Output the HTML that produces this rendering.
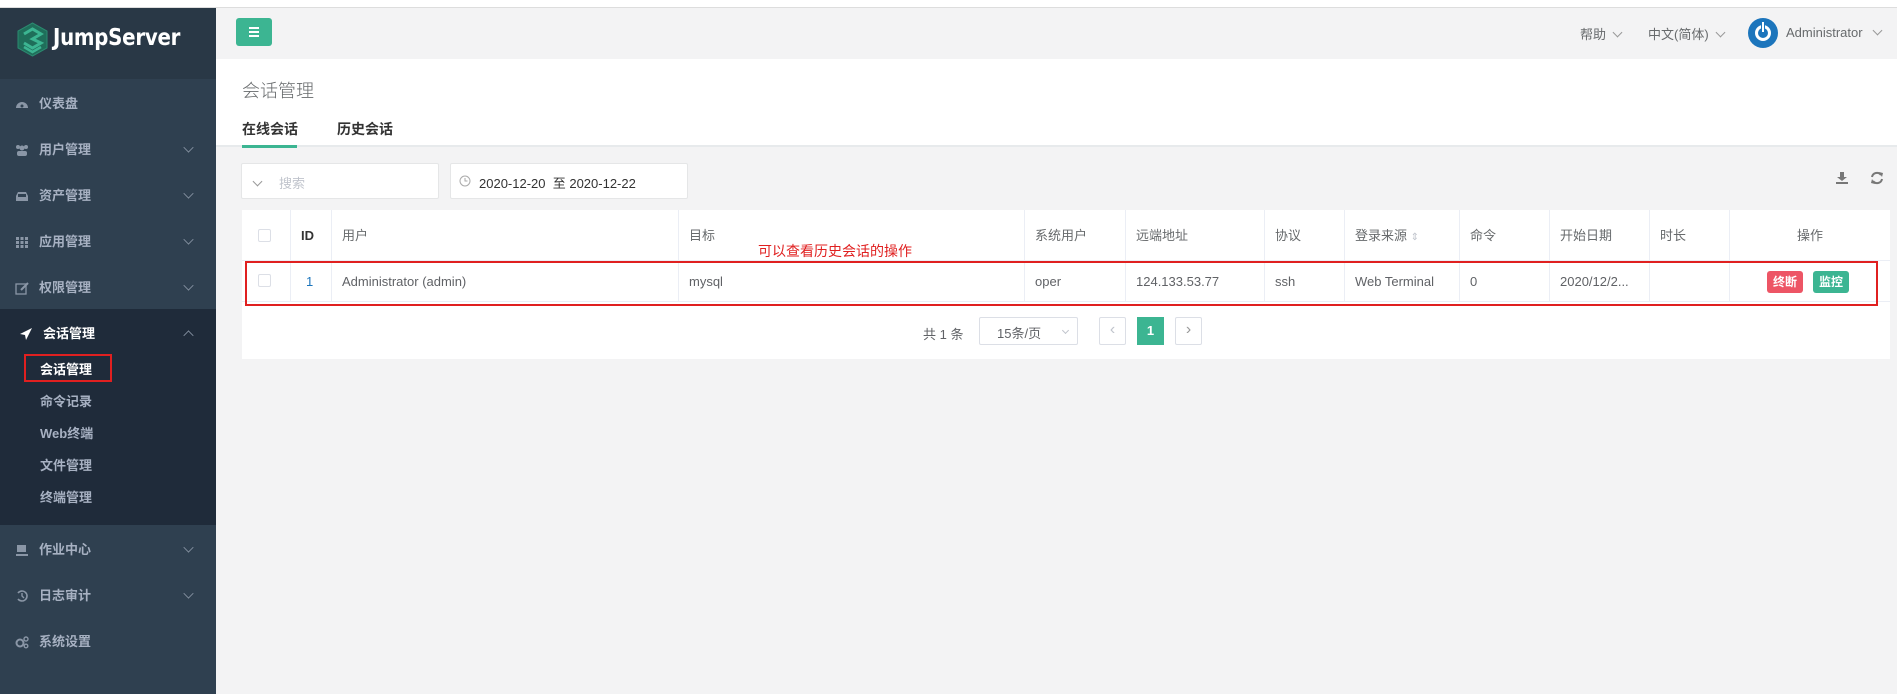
<!DOCTYPE html>
<html><head><meta charset="utf-8"><style>
*{box-sizing:border-box;margin:0;padding:0}
body{width:1897px;height:694px;overflow:hidden;background:#f3f3f4;font-family:"Liberation Sans","Noto Sans CJK SC",sans-serif;font-size:13px;color:#676a6c;position:relative}
.a{position:absolute}
.topw{left:0;top:0;width:1897px;height:8px;background:#fff;border-bottom:1px solid #ddd}
.side{left:0;top:8px;width:216px;height:686px;background:#2f4050}
.logo{left:0;top:8px;width:216px;height:71px;background:#293846}
.mi{position:absolute;left:0;width:216px;color:#a7b1c2;font-weight:bold;font-size:13px;line-height:20px}
.mi .ic{position:absolute;left:15px;top:3px;width:14px;height:14px}
.mi .t{position:absolute;left:39px;top:0;white-space:nowrap}
.mi .ch{position:absolute;left:184px;top:3px;width:9px;height:9px;border-right:1px solid #8a96a6;border-bottom:1px solid #8a96a6;transform:rotate(45deg) scale(.8)}
.sub{position:absolute;left:40px;color:#a7b1c2;font-weight:bold;font-size:13px;line-height:20px}
.hdr{left:216px;top:9px;width:1681px;height:50px;background:#f3f3f4}
.wh{left:216px;top:59px;width:1681px;height:88px;background:#fff;border-bottom:2px solid #e7eaec}
.box{background:#fff;border:1px solid #e5e6e7;border-radius:2px}
.th{position:absolute;top:210px;height:51px;line-height:51px;font-size:13px;color:#676a6c;border-left:1px solid #ebeef5;padding-left:10px;white-space:nowrap}
.td{position:absolute;top:261px;height:41px;line-height:41px;font-size:13px;color:#606266;border-left:1px solid #ebeef5;padding-left:10px;white-space:nowrap}
.cb{position:absolute;width:13px;height:13px;border:1px solid #dcdfe6;border-radius:2px;background:#fff}
.dc{display:inline-block;width:7px;height:7px;border-right:1px solid #999;border-bottom:1px solid #999;transform:rotate(45deg);margin-left:8px;position:relative;top:-3px}
</style></head><body>
<div class="a topw"></div>
<div class="a side"></div>
<div class="a logo"></div>
<svg class="a" style="left:17px;top:22px" width="31" height="35" viewBox="0 0 31 35"><polygon points="15.5,1 30,9 30,26 15.5,34 1,26 1,9" fill="#1f6e5a" stroke="#2b8a70" stroke-width="1"/><path d="M7 12 L15.5 7 L24 12 L15.5 17 L24 21 L15.5 26 L7 21" fill="none" stroke="#3cb592" stroke-width="3"/><path d="M7 25 L15.5 30 L24 25" fill="none" stroke="#3cb592" stroke-width="2.5"/></svg>
<div class="a" style="left:53px;top:25px;color:#fff;font-weight:bold;font-size:23px;letter-spacing:-0.3px;font-family:'DejaVu Sans','Liberation Sans',sans-serif;transform:scaleX(.86);transform-origin:left">JumpServer</div>

<div class="mi" style="top:94px"><svg class="ic" viewBox="0 0 14 14"><path d="M1 11 A6 6 0 1 1 13 11 Z" fill="#8a96a6"/><circle cx="7" cy="9" r="1.5" fill="#2f4050"/></svg><span class="t">仪表盘</span></div>
<div class="mi" style="top:140px"><svg class="ic" viewBox="0 0 14 14"><circle cx="3" cy="4" r="2" fill="#8a96a6"/><circle cx="11" cy="4" r="2" fill="#8a96a6"/><circle cx="7" cy="5" r="2.5" fill="#8a96a6"/><rect x="2" y="8" width="10" height="5" rx="2" fill="#8a96a6"/></svg><span class="t">用户管理</span><span class="ch"></span></div>
<div class="mi" style="top:186px"><svg class="ic" viewBox="0 0 14 14"><path d="M1 7 L3 3 H11 L13 7 V12 H1Z" fill="#8a96a6"/><rect x="3" y="5" width="8" height="3" fill="#2f4050"/></svg><span class="t">资产管理</span><span class="ch"></span></div>
<div class="mi" style="top:232px"><svg class="ic" viewBox="0 0 14 14" fill="#8a96a6"><rect x="1" y="2" width="3" height="3"/><rect x="5.5" y="2" width="3" height="3"/><rect x="10" y="2" width="3" height="3"/><rect x="1" y="6" width="3" height="3"/><rect x="5.5" y="6" width="3" height="3"/><rect x="10" y="6" width="3" height="3"/><rect x="1" y="10" width="3" height="3"/><rect x="5.5" y="10" width="3" height="3"/><rect x="10" y="10" width="3" height="3"/></svg><span class="t">应用管理</span><span class="ch"></span></div>
<div class="mi" style="top:278px"><svg class="ic" viewBox="0 0 14 14"><rect x="1" y="3" width="10" height="10" fill="none" stroke="#8a96a6" stroke-width="1.3"/><path d="M6 9 L13 2" stroke="#8a96a6" stroke-width="2"/></svg><span class="t">权限管理</span><span class="ch"></span></div>
<div class="a" style="left:0;top:309px;width:216px;height:216px;background:#1f2b3a"></div>
<div class="mi" style="top:324px;color:#fff"><svg class="ic" style="left:19px" viewBox="0 0 14 14"><path d="M13 1 L1 7 L6 8 L7 13Z" fill="#fff"/></svg><span class="t" style="left:43px">会话管理</span><span class="ch" style="transform:rotate(-135deg) scale(.8);top:7px"></span></div>
<div class="sub" style="top:360px;color:#fff">会话管理</div>
<div class="a" style="left:24px;top:354px;width:88px;height:28px;border:2px solid #e02020"></div>
<div class="sub" style="top:392px">命令记录</div>
<div class="sub" style="top:424px">Web终端</div>
<div class="sub" style="top:456px">文件管理</div>
<div class="sub" style="top:488px">终端管理</div>
<div class="mi" style="top:540px"><svg class="ic" viewBox="0 0 14 14" fill="#8a96a6"><rect x="2" y="2" width="9" height="7"/><rect x="1" y="11" width="12" height="2"/></svg><span class="t">作业中心</span><span class="ch"></span></div>
<div class="mi" style="top:586px"><svg class="ic" viewBox="0 0 14 14"><path d="M3 4 A5 5 0 1 1 3 10" fill="none" stroke="#8a96a6" stroke-width="1.6"/><path d="M7 4 V7 L9 9" fill="none" stroke="#8a96a6" stroke-width="1.4"/></svg><span class="t">日志审计</span><span class="ch"></span></div>
<div class="mi" style="top:632px"><svg class="ic" viewBox="0 0 14 14"><circle cx="5" cy="8" r="3.5" fill="none" stroke="#8a96a6" stroke-width="2"/><circle cx="11" cy="4" r="2" fill="none" stroke="#8a96a6" stroke-width="1.4"/><circle cx="11" cy="11" r="1.8" fill="none" stroke="#8a96a6" stroke-width="1.4"/></svg><span class="t">系统设置</span></div>

<div class="a hdr"></div>
<div class="a" style="left:236px;top:18px;width:36px;height:28px;background:#3cb592;border-radius:3px"><div class="a" style="left:13px;top:9px;width:10px;height:2px;background:#fff;box-shadow:0 4px 0 #fff,0 8px 0 #fff"></div></div>
<div class="a" style="left:1580px;top:24px;font-size:13px;color:#676a6c">帮助<span class="dc"></span></div>
<div class="a" style="left:1648px;top:24px;font-size:13px;color:#676a6c">中文(简体)<span class="dc"></span></div>
<div class="a" style="left:1748px;top:18px;width:30px;height:30px;border-radius:50%;background:#1c75bc"></div>
<div class="a" style="left:1755px;top:25px;width:16px;height:16px;border-radius:50%;border:3px solid #fff"></div>
<div class="a" style="left:1761px;top:22px;width:4px;height:10px;background:#fff;border-left:1px solid #1c75bc;border-right:1px solid #1c75bc"></div>
<div class="a" style="left:1786px;top:25px;font-size:13px;color:#676a6c">Administrator</div>
<div class="a" style="left:1874px;top:27px;width:7px;height:7px;border-right:1px solid #999;border-bottom:1px solid #999;transform:rotate(45deg)"></div>

<div class="a wh"></div>
<div class="a" style="left:242px;top:77px;font-size:18px;color:#676a6c;font-weight:300">会话管理</div>
<div class="a" style="left:242px;top:119px;font-size:14px;color:#333;font-weight:bold">在线会话</div>
<div class="a" style="left:242px;top:145px;width:55px;height:3px;background:#3cb592"></div>
<div class="a" style="left:337px;top:119px;font-size:14px;color:#333;font-weight:bold">历史会话</div>

<div class="a box" style="left:241px;top:163px;width:198px;height:36px"><span class="dc" style="position:absolute;left:4px;top:14px"></span><span class="a" style="left:37px;top:9px;color:#c0c4cc">搜索</span></div>
<div class="a box" style="left:450px;top:163px;width:238px;height:36px"><svg class="a" style="left:8px;top:11px" width="12" height="12" viewBox="0 0 12 12"><circle cx="6" cy="6" r="5" fill="none" stroke="#aaa"/><path d="M6 3V6H8.5" fill="none" stroke="#aaa"/></svg><span class="a" style="left:28px;top:9px;color:#333;font-size:13px">2020-12-20&nbsp; 至 2020-12-22</span></div>
<svg class="a" style="left:1835px;top:171px" width="14" height="14" viewBox="0 0 14 14" fill="#777"><path d="M5 1H9V6H12L7 10L2 6H5Z"/><rect x="1" y="11" width="12" height="2"/></svg>
<svg class="a" style="left:1870px;top:171px" width="14" height="14" viewBox="0 0 14 14"><path d="M2 6 A5 5 0 0 1 11 4 M12 8 A5 5 0 0 1 3 10" fill="none" stroke="#777" stroke-width="2"/><path d="M9 1 L13 2 L12 6Z M5 13 L1 12 L2 8Z" fill="#777"/></svg>

<div class="a" style="left:242px;top:210px;width:1648px;height:149px;background:#fff"></div>
<div class="a" style="left:242px;top:260px;width:1648px;height:1px;background:#ebeef5"></div>
<div class="a" style="left:242px;top:301px;width:1648px;height:1px;background:#ebeef5"></div>
<div class="cb" style="left:258px;top:229px"></div>
<div class="th" style="left:290px;width:41px;font-weight:bold;color:#333">ID</div>
<div class="th" style="left:331px;width:347px">用户</div>
<div class="th" style="left:678px;width:346px">目标</div>
<div class="th" style="left:1024px;width:101px">系统用户</div>
<div class="th" style="left:1125px;width:139px">远端地址</div>
<div class="th" style="left:1264px;width:80px">协议</div>
<div class="th" style="left:1344px;width:115px">登录来源 <span style="color:#c0c4cc;font-size:10px">⇕</span></div>
<div class="th" style="left:1459px;width:90px">命令</div>
<div class="th" style="left:1549px;width:100px">开始日期</div>
<div class="th" style="left:1649px;width:80px">时长</div>
<div class="th" style="left:1729px;width:161px;text-align:center;padding:0">操作</div>
<div class="cb" style="left:258px;top:274px"></div>
<div class="td" style="left:290px;width:41px;color:#1c75bc;padding-left:15px">1</div>
<div class="td" style="left:331px;width:347px">Administrator (admin)</div>
<div class="td" style="left:678px;width:346px">mysql</div>
<div class="td" style="left:1024px;width:101px">oper</div>
<div class="td" style="left:1125px;width:139px">124.133.53.77</div>
<div class="td" style="left:1264px;width:80px">ssh</div>
<div class="td" style="left:1344px;width:115px">Web Terminal</div>
<div class="td" style="left:1459px;width:90px">0</div>
<div class="td" style="left:1549px;width:100px">2020/12/2...</div>
<div class="td" style="left:1649px;width:80px"></div>
<div class="td" style="left:1729px;width:161px"></div>
<div class="a" style="left:1767px;top:271px;width:36px;height:22px;background:#ed5565;border-radius:3px;color:#fff;font-weight:bold;font-size:12px;text-align:center;line-height:22px">终断</div>
<div class="a" style="left:1813px;top:271px;width:36px;height:22px;background:#3cb592;border-radius:3px;color:#fff;font-weight:bold;font-size:12px;text-align:center;line-height:22px">监控</div>
<div class="a" style="left:245px;top:261px;width:1633px;height:45px;border:2px solid #e02020"></div>
<div class="a" style="left:758px;top:241px;color:#e02020;font-size:14px">可以查看历史会话的操作</div>

<div class="a" style="left:923px;top:324px;color:#606266">共 1 条</div>
<div class="a box" style="left:979px;top:317px;width:99px;height:28px;border-color:#dcdfe6"><span class="a" style="left:17px;top:5px;color:#606266">15条/页</span><span class="dc" style="position:absolute;left:75px;top:10px;width:5px;height:5px;border-color:#c0c4cc"></span></div>
<div class="a box" style="left:1099px;top:317px;width:27px;height:28px;border-color:#dcdfe6;color:#c0c4cc;text-align:center;line-height:24px;font-size:16px">‹</div>
<div class="a" style="left:1137px;top:317px;width:27px;height:28px;background:#3cb592;color:#fff;text-align:center;line-height:28px;font-weight:bold">1</div>
<div class="a box" style="left:1175px;top:317px;width:27px;height:28px;border-color:#dcdfe6;color:#999;text-align:center;line-height:24px;font-size:16px">›</div>
</body></html>
